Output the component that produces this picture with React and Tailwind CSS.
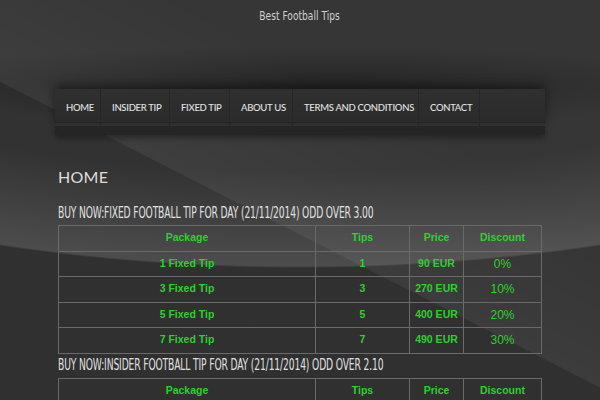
const navItems = [
  { label: 'HOME', w: 'w-[46px]' },
  { label: 'INSIDER TIP', w: 'w-[69px]' },
  { label: 'FIXED TIP', w: 'w-[60px]' },
  { label: 'ABOUT US', w: 'w-[63px]' },
  { label: 'TERMS AND CONDITIONS', w: 'w-[126px]' },
  { label: 'CONTACT', w: 'w-[61px]' },
];

const fixedRows = [
  { pkg: '1 Fixed Tip', tips: '1', price: '90 EUR', disc: '0%' },
  { pkg: '3 Fixed Tip', tips: '3', price: '270 EUR', disc: '10%' },
  { pkg: '5 Fixed Tip', tips: '5', price: '400 EUR', disc: '20%' },
  { pkg: '7 Fixed Tip', tips: '7', price: '490 EUR', disc: '30%' },
];

const cell = 'border border-[#6a6a6a] text-center align-middle h-[25.5px] p-0';

function Heading({ children }) {
  return (
    <div className="h-[24px] flex items-center overflow-visible">
      <span
        className="inline-block origin-left scale-x-[0.68] whitespace-nowrap text-[15px] text-[#e0e0e0] tracking-[-0.2px]"
        style={{ fontFamily: '"DejaVu Sans Condensed", "Liberation Sans", sans-serif' }}
      >
        {children}
      </span>
    </div>
  );
}

function PriceTable({ rows }) {
  return (
    <table className="w-full table-fixed border-collapse border border-[#7a7a7a] font-['Liberation_Sans',Arial,sans-serif] text-[#2bd22b]">
      <colgroup>
        <col className="w-[257px]" />
        <col className="w-[94px]" />
        <col className="w-[54px]" />
        <col className="w-[78px]" />
      </colgroup>
      <thead>
        <tr className="text-[10.5px] font-bold">
          <td className={cell}>Package</td>
          <td className={cell}>Tips</td>
          <td className={cell}>Price</td>
          <td className={cell}>Discount</td>
        </tr>
      </thead>
      <tbody>
        {rows.map(r => (
          <tr key={r.pkg}>
            <td className={`${cell} text-[10.5px] font-bold`}>{r.pkg}</td>
            <td className={`${cell} text-[10.5px] font-bold`}>{r.tips}</td>
            <td className={`${cell} text-[10.5px] font-bold`}>{r.price}</td>
            <td className={`${cell} text-[12px]`}>{r.disc}</td>
          </tr>
        ))}
      </tbody>
    </table>
  );
}

export default function App() {
  return (
    <div className="w-[600px] h-[400px] overflow-hidden bg-[#323232] bg-[radial-gradient(ellipse_1000px_480px_at_300px_-212px,rgba(255,255,255,0)_80%,rgba(255,255,255,0.13)_99.6%,rgba(0,0,0,0.04)_100%),linear-gradient(27deg,rgba(255,255,255,0)_45%,rgba(255,255,255,0.06)_45.2%,rgba(255,255,255,0.02)_70%),radial-gradient(ellipse_420px_40px_at_300px_86px,rgba(0,0,0,0.35),rgba(0,0,0,0))] font-['Lato',sans-serif]">
      {/* site title */}
      <div className="pt-[2px] text-center">
        <span
          className="inline-block scale-x-[0.78] text-[13px] text-[#d0d0d0]"
          style={{ fontFamily: '"DejaVu Sans Condensed", "Liberation Sans", sans-serif' }}
        >
          Best Football Tips
        </span>
      </div>

      {/* nav */}
      <div className="mt-[63px] mx-auto w-[490px]">
        <div className="flex bg-[#2d2d2d] bg-[linear-gradient(#303030,#2a2a2a)] shadow-[0_-4px_10px_rgba(0,0,0,0.45)]">
          {navItems.map(n => (
            <div key={n.label} className={`${n.w} flex flex-col border-r border-[#262626]`}>
              <div className="h-[33px] flex items-center pl-[11px] pt-[5px] text-[9.5px] tracking-[-0.3px] font-medium text-[#e2e2e2] whitespace-nowrap">
                {n.label}
              </div>
              <div className="h-[4px] border-t border-[#232323] bg-[#2f2f2f]" />
            </div>
          ))}
          <div className="flex-1 flex flex-col">
            <div className="h-[33px]" />
            <div className="h-[4px] border-t border-[#232323] bg-[#2f2f2f]" />
          </div>
        </div>
        <div className="h-[9px] bg-[#252525] shadow-[0_3px_6px_rgba(0,0,0,0.35)]" />
      </div>

      {/* content */}
      <div className="mx-auto w-[484px] pt-[33px]">
        <h1 className="text-[16px] leading-[18px] text-[#dedede] font-normal tracking-[0.3px]">HOME</h1>
        <div className="mt-[15px]">
          <Heading>BUY NOW:FIXED FOOTBALL TIP FOR DAY (21/11/2014) ODD OVER 3.00</Heading>
        </div>
        <PriceTable rows={fixedRows} />
        <Heading>BUY NOW:INSIDER FOOTBALL TIP FOR DAY (21/11/2014) ODD OVER 2.10</Heading>
        <PriceTable rows={[]} />
      </div>
    </div>
  );
}
